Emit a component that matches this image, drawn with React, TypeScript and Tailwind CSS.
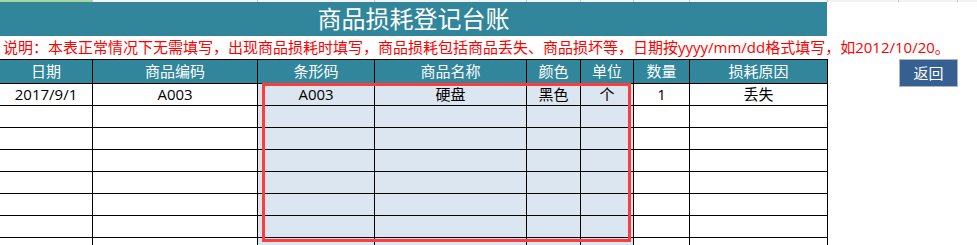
import React from 'react'

const cols = [93, 165, 117, 152, 54, 53, 56, 138]
const headers = ['日期', '商品编码', '条形码', '商品名称', '颜色', '单位', '数量', '损耗原因']
const rows: string[][] = [
  ['2017/9/1', 'A003', 'A003', '硬盘', '黑色', '个', '1', '丢失'],
  ...Array.from({ length: 7 }, () => ['', '', '', '', '', '', '', '']),
]
// columns filled with light blue in data rows
const shaded = [2, 3, 4, 5]

const gridCols = 'grid grid-cols-[93px_165px_117px_152px_54px_53px_56px_138px]'

const App: React.FC = () => {
  return (
    <div
      className="h-[245px] w-[977px] overflow-hidden bg-white"
      style={{ fontFamily: '"Open Sans", "Noto Sans CJK SC", sans-serif' }}
    >
      {/* sliver of the sheet row above */}
      <div className="flex h-[2px] bg-[#f3f3f3]">
        {cols.map((w, i) => (
          <div
            key={i}
            className={i === 0 ? 'h-full border-r border-[#c8c8c8] bg-[#a9d5a0]' : 'h-full border-r border-[#c8c8c8]'}
            style={{ width: w }}
          />
        ))}
        <div className="h-full w-[71px] border-r border-[#c8c8c8]" />
        <div className="h-full w-[59px] border-r border-[#c8c8c8]" />
      </div>

      <div className="flex h-[34px] w-[827px] items-center justify-center bg-[#31869b] text-[24px] leading-none text-white">
        商品损耗登记台账
      </div>

      <div className="flex h-[23px] items-center whitespace-nowrap pl-[3px] text-[15px] leading-none text-[#ff0000]">
        说明：本表正常情况下无需填写，出现商品损耗时填写，商品损耗包括商品丢失、商品损坏等，日期按yyyy/mm/dd格式填写，如2012/10/20。
      </div>

      <div className="flex items-start">
        <div className="relative w-[828px]">
          <div className={`${gridCols} h-[25px] border-t border-black bg-[#31869b] text-[15px] text-white`}>
            {headers.map((h, i) => (
              <div key={i} className="flex items-center justify-center border-r border-b border-black leading-none">
                {h}
              </div>
            ))}
          </div>
          {rows.map((r, ri) => (
            <div key={ri} className={`${gridCols} h-[22px] text-[15px] text-black`}>
              {r.map((c, ci) => (
                <div
                  key={ci}
                  className={`flex items-center justify-center border-r border-b border-black leading-none ${
                    shaded.includes(ci) ? 'bg-[#dce6f1]' : 'bg-white'
                  }`}
                >
                  {c}
                </div>
              ))}
            </div>
          ))}
          <div className="pointer-events-none absolute top-[24px] left-[262px] h-[159px] w-[369px] border-[3px] border-[#ff3b3b]" />
        </div>

        <button className="ml-[71px] flex h-[28px] w-[59px] items-center justify-center border border-[#b4b4b4] bg-[#376092] text-[15px] leading-none text-white">
          返回
        </button>
      </div>
    </div>
  )
}

export default App
